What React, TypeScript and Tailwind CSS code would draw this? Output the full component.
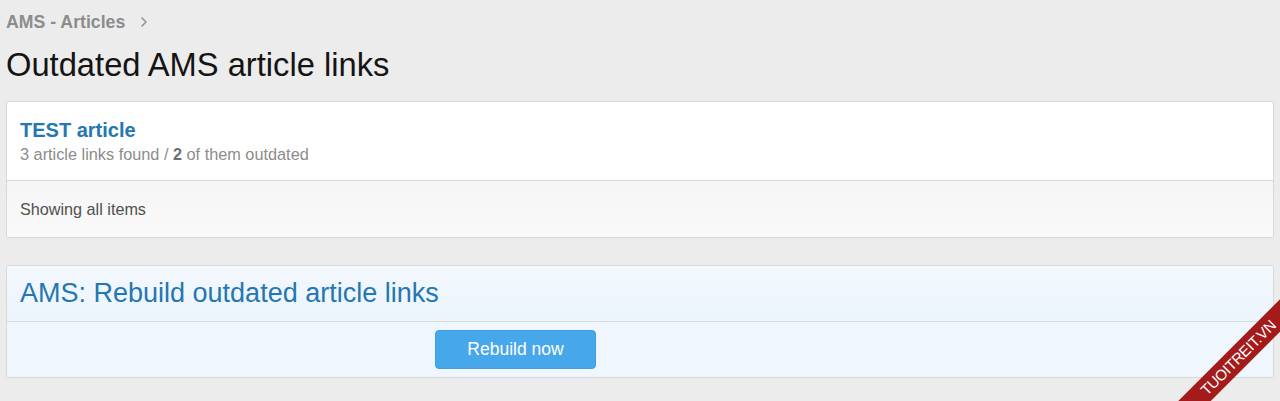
import React from "react";

export default function App() {
  return (
    <div
      className="relative w-[1280px] h-[401px] overflow-hidden bg-[#ececec] px-[6px]"
      style={{ fontFamily: '"Liberation Sans", Arial, sans-serif' }}
    >
      <div className="pt-[11px] flex items-center text-[17.7px] font-bold text-[#8c8c8c] h-[33px] leading-[22px]">
        <span>AMS - Articles</span>
        <svg className="ml-[15px]" width="8" height="12" viewBox="0 0 8 12" fill="none">
          <path d="M2 2l4 4-4 4" stroke="#8c8c8c" strokeWidth="1.4" strokeLinecap="round" strokeLinejoin="round" />
        </svg>
      </div>
      <h1 className="mt-[13px] text-[32.7px] leading-[38px] text-[#141414] font-normal">
        Outdated AMS article links
      </h1>
      <div className="mt-[17px] border border-[#d8d8d8] rounded-[3px] bg-white overflow-hidden">
        <div className="px-[13px] pt-[16px] h-[78px]">
          <div className="text-[20px] leading-[24px] font-bold text-[#2577b1]">TEST article</div>
          <div className="text-[16.3px] leading-[20px] text-[#8c8c8c] mt-[2px]">
            3 article links found / <b className="text-[#6e6e6e]">2</b> of them outdated
          </div>
        </div>
        <div className="border-t border-[#d8d8d8] h-[57px] flex items-center px-[13px] text-[16.2px] text-[#505050] bg-gradient-to-b from-[#f5f5f5] to-[#fafafa]">
          Showing all items
        </div>
      </div>
      <div className="mt-[27px] border border-[#d8d8d8] rounded-[3px] bg-[#eff6fd] overflow-hidden">
        <div className="h-[55px] flex items-center px-[13px] text-[27px] text-[#2577b1] bg-gradient-to-b from-[#f3f8fe] to-[#ecf4fc]">
          AMS: Rebuild outdated article links
        </div>
        <div className="border-t border-[#d5d9dd] h-[56px] flex items-center bg-[#eff6fd]">
          <div className="w-[428px]" />
          <button className="w-[161px] h-[39px] rounded-[4px] bg-[#47a7eb] border border-[#3f9fe4] text-white text-[17.5px]">
            Rebuild now
          </button>
        </div>
      </div>
      <div className="absolute left-[1118px] top-[346px] w-[240px] h-[23px] bg-[#a31b1b] -rotate-45 flex items-center justify-center text-white text-[15px] leading-none tracking-[-0.3px]">
        TUOITREIT.VN
      </div>
    </div>
  );
}
